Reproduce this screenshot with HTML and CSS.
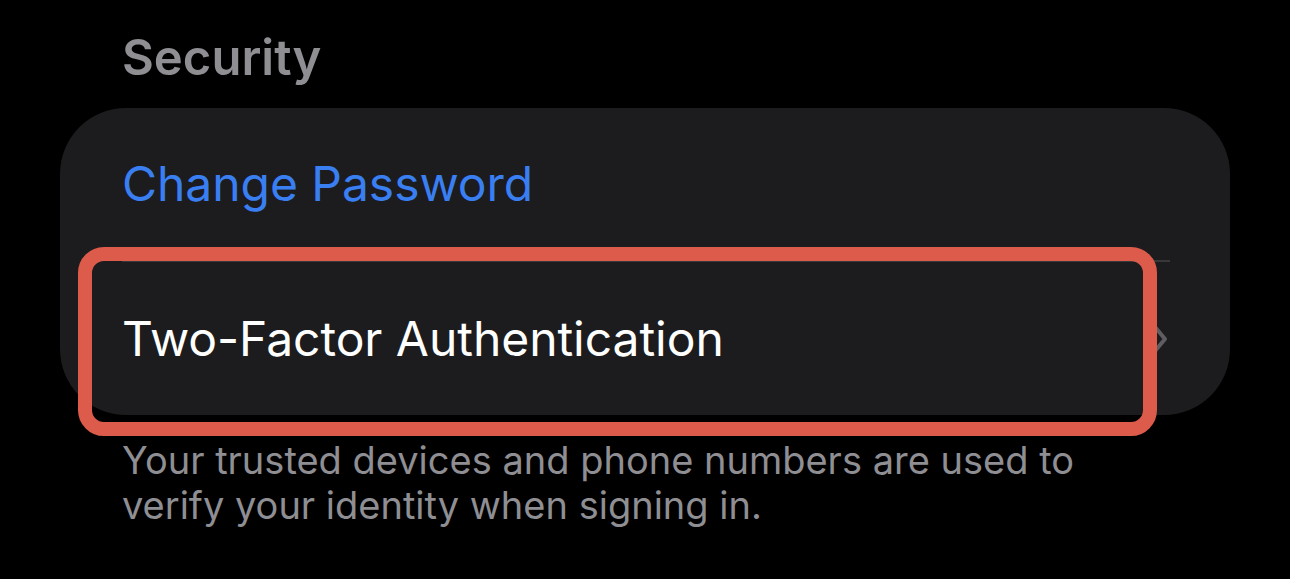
FILE: index.html
```html
<!DOCTYPE html>
<html lang="en">
<head>
<meta charset="utf-8">
<title>Security</title>
<link rel="stylesheet" href="styles.css">
</head>
<body>
<main class="page">
  <h2 class="section-title">Security</h2>
  <div class="group">
    <div class="row">
      <span class="row-label link">Change Password</span>
    </div>
    <div class="separator"></div>
    <div class="row row-nav">
      <span class="row-label">Two-Factor Authentication</span>
      <svg class="chevron" width="16" height="30" viewBox="0 0 16 30" aria-hidden="true">
        <path d="M3 3 L13 15 L3 27" fill="none" stroke="currentColor" stroke-width="4" stroke-linecap="round" stroke-linejoin="round"/>
      </svg>
      <div class="highlight"></div>
    </div>
  </div>
  <p class="footer-note">Your trusted devices and phone numbers are used to verify your identity when signing in.</p>
</main>
</body>
</html>
```

FILE: styles.css
```css
* {
  box-sizing: border-box;
}

html, body {
  margin: 0;
  padding: 0;
  background: #000;
}

body {
  font-family: "Inter", "Liberation Sans", sans-serif;
  -webkit-font-smoothing: antialiased;
}

.page {
  width: 1290px;
  height: 579px;
  padding: 0 60px 0 60px;
  overflow: hidden;
}

.section-title {
  margin: 0;
  padding: 28px 0 0 62px;
  height: 108px;
  font-size: 49px;
  line-height: 60px;
  font-weight: 600;
  color: #8e8e93;
}

.group {
  background: #1c1c1e;
  border-radius: 66px;
  display: flex;
  flex-direction: column;
}

.row {
  position: relative;
  height: 152px;
  padding: 0 62px;
  display: flex;
  align-items: center;
  justify-content: space-between;
}

.row-nav {
  height: 153px;
}

.row-label {
  font-size: 48px;
  line-height: 60px;
  letter-spacing: -0.05px;
  color: #fff;
  white-space: nowrap;
}

.row-label.link {
  color: #3a7ff2;
}

.separator {
  height: 2px;
  margin: 0 60px 0 62px;
  background: #38383a;
}

.chevron {
  color: #5d5d62;
  flex: none;
}

/* red annotation frame drawn over the second row */
.highlight {
  position: absolute;
  left: 18px;
  right: 73px;
  top: -15px;
  bottom: -21px;
  border: 14px solid #dc5b4a;
  border-radius: 26px;
  pointer-events: none;
}

.footer-note {
  margin: 0;
  padding: 23px 0 0 62px;
  width: 1062px;
  font-size: 38px;
  line-height: 45px;
  color: #8e8e93;
}
```
